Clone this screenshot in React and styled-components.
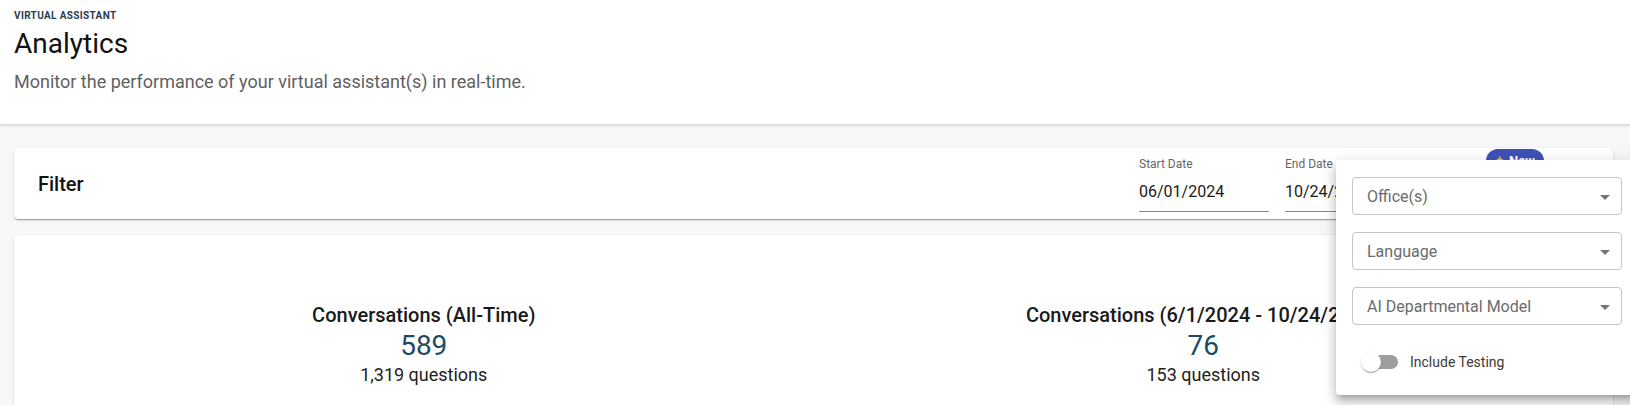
import React from 'react';
import styled, { createGlobalStyle } from 'styled-components';

const GlobalStyle = createGlobalStyle`
    html, body {
        margin: 0;
        padding: 0;
        height: 405px;
        overflow: hidden;
        background: #f7f7f7;
        font-family: Roboto, "Liberation Sans", Arial, sans-serif;
    }
    * { box-sizing: border-box; }
`

const Page = styled.div`
    position: relative;
    width: 1630px;
    height: 405px;
    overflow: hidden;
`

const Header = styled.header`
    background: #fff;
    height: 125px;
    padding: 9px 14px 0 14px;
    border-bottom: 1px solid #dcdcdc;
    box-shadow: 0 1px 3px rgba(0,0,0,0.12);
`

const Overline = styled.div`
    font-size: 10px;
    line-height: 14px;
    font-weight: 700;
    letter-spacing: 0.35px;
    color: #2b3d4f;
    text-transform: uppercase;
`

const Title = styled.h1`
    margin: 3px 0 0 0;
    font-size: 28px;
    line-height: 36px;
    font-weight: 400;
    color: #111;
`

const Subtitle = styled.p`
    margin: 8px 0 0 0;
    font-size: 18px;
    line-height: 24px;
    color: #5f5f5f;
`

const Main = styled.main`
    display: flex;
    flex-direction: column;
    gap: 16px;
    padding: 23px 17px 0 14px;
`

const Card = styled.section`
    position: relative;
    background: #fff;
    border-radius: 4px;
    box-shadow: 0 2px 1px -1px rgba(0,0,0,0.2), 0 1px 1px 0 rgba(0,0,0,0.14), 0 1px 3px 0 rgba(0,0,0,0.12);
`

const FilterBar = styled(Card)`
    height: 71px;
    display: flex;
    align-items: center;
    justify-content: space-between;
    padding: 0 16px 0 24px;
`

const FilterTitle = styled.h2`
    margin: 0;
    font-size: 20px;
    font-weight: 500;
    color: #111;
`

const Controls = styled.div`
    display: flex;
    align-items: center;
    gap: 16px;
`

const DateField = styled.label`
    display: flex;
    flex-direction: column;
    width: 130px;
    border-bottom: 1px solid #8a8a8a;
    padding-bottom: 7px;
`

const FieldLabel = styled.span`
    font-size: 12px;
    line-height: 16px;
    color: #666;
`

const FieldValue = styled.span`
    margin-top: 8px;
    font-size: 16px;
    line-height: 24px;
    color: #1a1a1a;
    white-space: nowrap;
`

const FiltersButton = styled.button`
    position: relative;
    width: 166px;
    height: 36px;
    border: 1px solid #3f51b5;
    border-radius: 4px;
    background: #fff;
    color: #3f51b5;
    font-family: inherit;
    font-size: 14px;
    font-weight: 500;
`

const NewBadge = styled.span`
    position: absolute;
    top: -18px;
    left: 54px;
    height: 24px;
    padding: 0 9px;
    display: flex;
    align-items: center;
    gap: 5px;
    border-radius: 12px;
    background: #3f51b5;
    color: #fff;
    font-size: 13px;
    font-weight: 700;
`

const Sparkle = styled.span`
    color: #e8c24a;
    font-size: 11px;
`

const StatsCard = styled(Card)`
    display: grid;
    grid-template-columns: 1fr 1fr;
    padding: 68px 20px;
`

const Stat = styled.div`
    display: flex;
    flex-direction: column;
    align-items: center;
    white-space: nowrap;
`

const StatTitle = styled.div`
    font-size: 20px;
    line-height: 24px;
    font-weight: 500;
    color: #1a1a1a;
`

const StatNumber = styled.div`
    font-size: 28px;
    line-height: 38px;
    color: #1e4a66;
`

const StatSub = styled.div`
    font-size: 18px;
    line-height: 20px;
    color: #222;
`

const Popover = styled.div`
    position: absolute;
    top: 160px;
    left: 1336px;
    width: 302px;
    height: 235px;
    padding: 17px 16px 0 16px;
    background: #fff;
    border-radius: 4px;
    box-shadow: 0 5px 5px -3px rgba(0,0,0,0.2), 0 8px 10px 1px rgba(0,0,0,0.14), 0 3px 14px 2px rgba(0,0,0,0.12);
    display: flex;
    flex-direction: column;
    gap: 17px;
`

const Select = styled.div`
    position: relative;
    height: 38px;
    display: flex;
    align-items: center;
    padding: 0 32px 0 14px;
    border: 1px solid #c4c4c4;
    border-radius: 4px;
    font-size: 16px;
    color: #6b6b6b;
`

const Arrow = styled.svg`
    position: absolute;
    right: 4px;
    top: 7px;
    width: 24px;
    height: 24px;
    fill: #757575;
`

const ToggleRow = styled.label`
    display: flex;
    align-items: center;
    height: 38px;
    margin-top: 1px;
    font-size: 14px;
    color: #3f3a36;
`

const Switch = styled.span`
    position: relative;
    width: 58px;
    height: 38px;
    padding: 12px;
    flex-shrink: 0;
`

const Track = styled.span`
    display: block;
    width: 34px;
    height: 14px;
    border-radius: 7px;
    background: #9e9e9e;
`

const Thumb = styled.span`
    position: absolute;
    top: 9px;
    left: 9px;
    width: 20px;
    height: 20px;
    border-radius: 50%;
    background: #fff;
    box-shadow: 0 2px 1px -1px rgba(0,0,0,0.2), 0 1px 1px 0 rgba(0,0,0,0.14), 0 1px 3px 0 rgba(0,0,0,0.12);
`

function DropDown({ label }) {
    return (
        <Select>
            {label}
            <Arrow viewBox="0 0 24 24"><path d="M7 10l5 5 5-5z" /></Arrow>
        </Select>
    )
}

const stats = [
    { title: 'Conversations (All-Time)', count: '589', questions: '1,319 questions' },
    { title: 'Conversations (6/1/2024 - 10/24/2024)', count: '76', questions: '153 questions' },
]

export default function App() {
    return (
        <Page>
            <GlobalStyle />
            <Header>
                <Overline>Virtual Assistant</Overline>
                <Title>Analytics</Title>
                <Subtitle>Monitor the performance of your virtual assistant(s) in real-time.</Subtitle>
            </Header>
            <Main>
                <FilterBar>
                    <FilterTitle>Filter</FilterTitle>
                    <Controls>
                        <DateField>
                            <FieldLabel>Start Date</FieldLabel>
                            <FieldValue>06/01/2024</FieldValue>
                        </DateField>
                        <DateField>
                            <FieldLabel>End Date</FieldLabel>
                            <FieldValue>10/24/2024</FieldValue>
                        </DateField>
                        <FiltersButton>
                            More Filters
                            <NewBadge><Sparkle>✦</Sparkle>New</NewBadge>
                        </FiltersButton>
                    </Controls>
                </FilterBar>
                <StatsCard>
                    {stats.map(s => (
                        <Stat key={s.title}>
                            <StatTitle>{s.title}</StatTitle>
                            <StatNumber>{s.count}</StatNumber>
                            <StatSub>{s.questions}</StatSub>
                        </Stat>
                    ))}
                </StatsCard>
            </Main>
            <Popover>
                <DropDown label="Office(s)" />
                <DropDown label="Language" />
                <DropDown label="AI Departmental Model" />
                <ToggleRow>
                    <Switch><Track /><Thumb /></Switch>
                    Include Testing
                </ToggleRow>
            </Popover>
        </Page>
    )
}
